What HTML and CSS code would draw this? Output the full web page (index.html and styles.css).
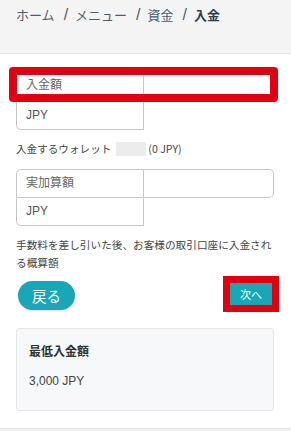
FILE: index.html
```html
<!DOCTYPE html>
<html lang="ja">
<head>
<meta charset="utf-8">
<link rel="stylesheet" href="styles.css">
</head>
<body>
<header class="header">
  <nav class="crumbs">
    <span class="crumb">ホーム</span><span class="sep">/</span><span class="crumb">メニュー</span><span class="sep">/</span><span class="crumb">資金</span><span class="sep">/</span><span class="crumb current">入金</span>
  </nav>
</header>
<main class="main">
  <div class="group first">
    <div class="lbl">入金額</div>
    <div class="inp"></div>
    <div class="unit">JPY</div>
    <div class="mark mark-amount"></div>
  </div>
  <p class="wallet">入金するウォレット<span class="redact"></span>(0 JPY)</p>
  <div class="group second">
    <div class="lbl">実加算額</div>
    <div class="inp"></div>
    <div class="unit">JPY</div>
  </div>
  <p class="note">手数料を差し引いた後、お客様の取引口座に入金される概算額</p>
  <div class="actions">
    <button class="btn back">戻る</button>
    <button class="btn next">次へ</button>
  </div>
  <section class="info">
    <h3 class="info-title">最低入金額</h3>
    <p class="info-value">3,000 JPY</p>
  </section>
</main>
<footer class="footer"></footer>
</body>
</html>
```
FILE: styles.css
```css
* { box-sizing: border-box; }
html, body { margin: 0; padding: 0; background: #fff; }
body {
  font-family: "Liberation Sans", "Noto Sans CJK JP", sans-serif;
  color: #444;
  width: 291px;
  height: 433px;
  overflow: hidden;
}
.header {
  height: 54px;
  background: #f4f4f4;
  border-bottom: 1px solid #e4e4e4;
  padding: 5px 16px 0;
}
.crumbs {
  font-family: "Noto Sans CJK JP", sans-serif;
  font-size: 13px;
  line-height: 20px;
  color: #4f5d6b;
  white-space: nowrap;
}
.sep {
  font-family: "Liberation Sans", sans-serif;
  font-size: 16px;
  margin: 0 7px 0 9px;
  color: #4f5d6b;
}
.current { font-weight: bold; color: #2f3d4b; }
.main { padding: 14px 17px 0 16px; }
.group {
  position: relative;
  display: grid;
  grid-template-columns: 128px 1fr;
  font-size: 12px;
  color: #666;
}
.lbl, .inp, .unit {
  border: 1px solid #c6c6c6;
  height: 29px;
  display: flex;
  align-items: center;
  padding: 0 0 4px 9px;
  font-family: "Noto Sans CJK JP", sans-serif;
}
.first .lbl, .first .inp { height: 34px; }
.lbl { border-radius: 5px 0 0 0; }
.inp { border-left: none; border-radius: 0 5px 5px 0; }
.unit {
  border-top: none;
  height: 28px;
  padding-bottom: 2px;
  border-radius: 0 0 0 5px;
  font-family: "Liberation Sans", sans-serif;
  color: #555;
}
.mark {
  position: absolute;
  border: 8px solid #e0000f;
  border-radius: 4px;
}
.mark-amount { left: -7px; top: -1px; width: 269px; height: 35px; }
.wallet {
  margin: 11px 0 0;
  font-size: 10.6px;
  line-height: 16px;
  color: #444;
  display: flex;
  align-items: center;
  font-family: "Noto Sans CJK JP", sans-serif;
}
.redact {
  display: inline-block;
  width: 30px;
  height: 14px;
  background: #ececec;
  margin: 0 2px 0 5px;
}
.second { margin-top: 12px; }
.note {
  margin: 10px 0 0;
  font-size: 10.65px;
  line-height: 18px;
  color: #444;
  font-family: "Noto Sans CJK JP", sans-serif;
}
.actions {
  margin-top: 4px;
  height: 35px;
  display: flex;
  align-items: center;
  justify-content: space-between;
}
.btn {
  border: none;
  background: #19a7b8;
  color: #fff;
  font-family: "Noto Sans CJK JP", sans-serif;
  padding: 0;
  cursor: pointer;
}
.back {
  width: 57px;
  height: 29px;
  border-radius: 15px;
  font-size: 14.5px;
  margin: 4px 0 0 2px;
  box-shadow: 0 1px 2px rgba(0,0,0,0.15);
}
.next {
  width: 42px;
  height: 22px;
  font-size: 11px;
  margin-right: 2px;
  box-shadow: 0 0 0 7px #e0000f;
}
.info {
  margin-top: 17px;
  height: 83px;
  background: #f7f8fa;
  border: 1px solid #e3e5e8;
  border-radius: 3px;
  padding: 14px 12px 0;
}
.info-title {
  margin: 0;
  font-size: 12px;
  line-height: 16px;
  font-weight: bold;
  color: #333;
  font-family: "Noto Sans CJK JP", sans-serif;
}
.info-value {
  margin: 14px 0 0;
  font-size: 12px;
  line-height: 16px;
  color: #444;
}
.footer {
  margin-top: 17px;
  height: 3px;
  background: #f2f2f2;
  border-top: 1px solid #e4e4e4;
}
```
